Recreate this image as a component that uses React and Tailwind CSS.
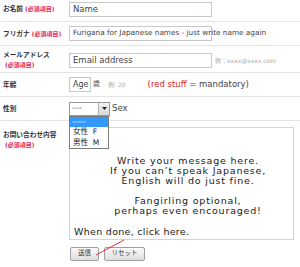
const Req = () => (
  <span className="text-[6px] font-bold text-[#e2245a] ml-[2px]">(必須項目)</span>
)

const Row = ({ label, req = true, twoLine = false, className = '', children }) => (
  <div className={`flex items-center border-b border-[#e4e4e4] ${className}`}>
    <div className="w-[69px] shrink-0 pl-[3px] text-[6.7px] font-bold text-[#333] leading-[10px]">
      {label}
      {req && (twoLine ? <div><Req /></div> : <Req />)}
    </div>
    <div className="flex items-center flex-1 min-w-0">{children}</div>
  </div>
)

const Field = ({ className = '', children }) => (
  <div className={`h-[15px] border border-[#c8c8c8] bg-white flex items-center pl-[3px] text-[#444] whitespace-nowrap ${className}`}>
    {children}
  </div>
)

export default function App() {
  return (
    <div
      className="relative w-[300px] h-[267px] overflow-hidden bg-white text-[#333]"
      style={{ fontFamily: '"DejaVu Sans", Verdana, "Noto Sans CJK JP", sans-serif' }}
    >
      {/* name */}
      <Row label="お名前" className="h-[22px] pb-[3px]">
        <Field className="w-[143px] text-[8.5px]">Name</Field>
      </Row>

      {/* furigana - text spills out of the box */}
      <Row label="フリガナ" className="h-[24px]">
        <Field className="w-[143px] overflow-visible text-[7.3px]">Furigana for Japanese names - just write name again</Field>
      </Row>

      {/* email */}
      <Row label="メールアドレス" twoLine className="h-[27px] pt-[2px]">
        <Field className="w-[143px] text-[8.5px]">Email address</Field>
        <span className="ml-[3px] text-[6px] text-[#aaa]">例：xxxx@xxxx.com</span>
      </Row>

      {/* age */}
      <Row label="年齢" req={false} className="h-[24px]">
        <Field className="w-[22px] pl-[2px] text-[8px]">Age</Field>
        <span className="ml-[2px] text-[7px] text-[#555]">歳</span>
        <span className="ml-[8px] text-[6px] text-[#aaa]">例: 20</span>
        <span className="ml-[22px] text-[8.5px] text-[#444]">
          <span className="text-[#e02020]">(red stuff</span> = mandatory)
        </span>
      </Row>

      {/* sex */}
      <Row label="性別" req={false} className="h-[24px]">
        <div className="relative">
          <div className="w-[41px] h-[14px] border border-[#9a9a9a] bg-white flex items-center">
            <span className="pl-[2px] text-[7px] flex-1">----</span>
            <div className="w-[11px] h-full border-l border-[#b0b0b0] bg-gradient-to-b from-[#f4f4f4] to-[#d8d8d8] flex items-center justify-center">
              <svg width="5" height="3" viewBox="0 0 5 3"><path d="M0 0h5L2.5 3z" fill="#222" /></svg>
            </div>
          </div>
          {/* open dropdown list */}
          <div className="absolute left-0 top-[14px] w-[40px] border border-[#7a7a7a] bg-white z-10 text-[7.5px] leading-[10.5px]">
            <div className="bg-[#3399ff] text-white pl-[2px]">-----</div>
            <div className="pl-[3px] text-[#222]">女性 &nbsp;F</div>
            <div className="pl-[3px] text-[#222]">男性 &nbsp;M</div>
          </div>
        </div>
        <span className="ml-[2px] text-[8.5px] text-[#444]">Sex</span>
      </Row>

      {/* message */}
      <div className="flex pt-[6px]">
        <div className="w-[69px] shrink-0 pl-[3px] pt-[3px] text-[6.7px] font-bold leading-[10px]">
          お問い合わせ内容
          <div><Req /></div>
        </div>
        <div className="flex-1">
          <div className="w-[225px] h-[113px] border border-[#d4d4d4] bg-white pl-[4px] pr-[4px] pt-[28px] text-[9.5px] tracking-[0.8px] leading-[10px] text-[#1a1a1a] flex flex-col">
            <div className="text-center pl-[13px]">
              Write your message here.<br />
              If you can’t speak Japanese,<br />
              English will do just fine.<br />
              <br />
              Fangirling optional,<br />
              perhaps even encouraged!
            </div>
            <div className="mt-auto mb-[2px] tracking-[0.3px]">When done, click here.</div>
          </div>
          <div className="flex gap-[5px] mt-[7px] ml-[1px]">
            <button className="w-[29px] h-[14px] border border-[#a0a0a0] rounded-[2px] bg-gradient-to-b from-[#fafafa] to-[#dedede] text-[6.5px] text-[#333]">送信</button>
            <button className="w-[41px] h-[14px] border border-[#a0a0a0] rounded-[2px] bg-gradient-to-b from-[#fafafa] to-[#dedede] text-[6.5px] text-[#333]">リセット</button>
          </div>
        </div>
      </div>

      {/* red pointer line */}
      <svg className="absolute left-0 top-0 pointer-events-none" width="300" height="267">
        <line x1="96" y1="255" x2="124" y2="240" stroke="#e0303a" strokeWidth="1" />
      </svg>
    </div>
  )
}
